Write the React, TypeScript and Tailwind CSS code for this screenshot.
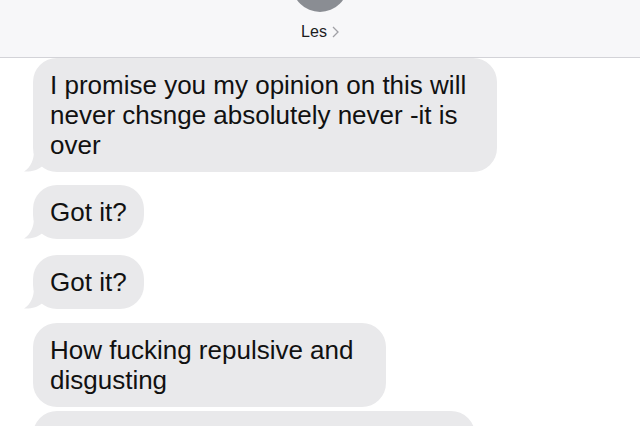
import React from "react";

function Tail() {
  return (
    <svg
      className="absolute bottom-0 left-[-9px]"
      width="24"
      height="22"
      viewBox="0 0 24 22"
    >
      <path
        d="M10 0 C10 10 7 17 0 21.5 C7 22 14 20 18 16.5 L24 16.5 L24 0 Z"
        fill="#e9e9eb"
      />
    </svg>
  );
}

function Bubble({
  children,
  tail,
  className,
}: {
  children: React.ReactNode;
  tail?: boolean;
  className?: string;
}) {
  return (
    <div className={"relative " + (className ?? "")}>
      {tail && <Tail />}
      <div className="relative rounded-[24px] bg-[#e9e9eb] pl-[17px] pr-[17px] py-[12px] text-[26px] leading-[30px] text-[#111111]">
        {children}
      </div>
    </div>
  );
}

export default function App() {
  return (
    <div
      className="w-[640px] h-[426px] overflow-hidden bg-white"
      style={{ fontFamily: '"Liberation Sans", Arial, sans-serif' }}
    >
      <div className="h-[58px] bg-[#f7f7f9] border-b border-[#d3d3d8] flex flex-col items-center overflow-hidden">
        <div className="w-[56px] h-[56px] rounded-full bg-[#8a8d93] mt-[-44px] shrink-0" />
        <div className="mt-[10px] flex items-center gap-[5px] text-[16px] leading-[20px] text-[#1c1c1e]">
          <span>Les</span>
          <svg width="7" height="12" viewBox="0 0 7 12">
            <path d="M1 1 L6 6 L1 11" fill="none" stroke="#a0a0a6" strokeWidth="1.3" />
          </svg>
        </div>
      </div>
      <div className="pl-[33px] flex flex-col items-start">
        <Bubble tail className="w-[464px]">
          I promise you my opinion on this will
          <br />
          never chsnge absolutely never -it is
          <br />
          over
        </Bubble>
        <Bubble tail className="mt-[13px]">
          Got it?
        </Bubble>
        <Bubble tail className="mt-[16px]">
          Got it?
        </Bubble>
        <Bubble className="w-[353px] mt-[14px]">
          How fucking repulsive and
          <br />
          disgusting
        </Bubble>
        <Bubble className="w-[442px] mt-[4px]">
          &nbsp;
          <br />
          &nbsp;
        </Bubble>
      </div>
    </div>
  );
}
